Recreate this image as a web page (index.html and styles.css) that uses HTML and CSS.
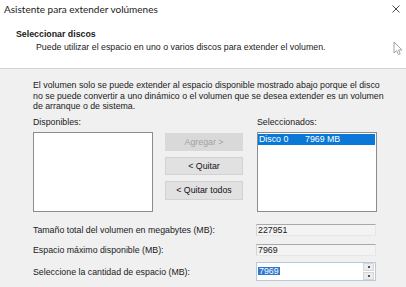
FILE: index.html
```html
<!DOCTYPE html>
<html>
<head>
<meta charset="utf-8">
<link rel="stylesheet" href="styles.css">
</head>
<body>
<div class="window">
  <div class="titlebar">
    <span class="title">Asistente para extender volúmenes</span>
    <svg class="close" width="8" height="8" viewBox="0 0 8 8"><path d="M0.5 0.5 L7.5 7.5 M7.5 0.5 L0.5 7.5" stroke="#333" stroke-width="0.9" fill="none"/></svg>
  </div>
  <div class="header">
    <div class="heading">Seleccionar discos</div>
    <div class="subheading">Puede utilizar el espacio en uno o varios discos para extender el volumen.</div>
  </div>
  <div class="content">
    <p class="note">El volumen solo se puede extender al espacio disponible mostrado abajo porque el disco<br>no se puede convertir a uno dinámico o el volumen que se desea extender es un volumen<br>de arranque o de sistema.</p>
    <div class="lists">
      <div class="col">
        <div class="label">Disponibles:</div>
        <div class="listbox"></div>
      </div>
      <div class="buttons">
        <div class="btn disabled">Agregar &gt;</div>
        <div class="btn">&lt; Quitar</div>
        <div class="btn tall">&lt; Quitar todos</div>
      </div>
      <div class="col">
        <div class="label">Seleccionados:</div>
        <div class="listbox">
          <div class="item"><span class="disk">Disco 0</span><span>7969 MB</span></div>
        </div>
      </div>
    </div>
    <div class="fields">
      <div class="row">
        <span class="flabel">Tamaño total del volumen en megabytes (MB):</span>
        <div class="ro">227951</div>
      </div>
      <div class="row r2">
        <span class="flabel">Espacio máximo disponible (MB):</span>
        <div class="ro">7969</div>
      </div>
      <div class="row r3">
        <span class="flabel">Seleccione la cantidad de espacio (MB):</span>
        <div class="spin">
          <span class="sel">7969</span>
          <div class="spinbtns">
            <div class="sb"><span class="dot"></span></div>
            <div class="sb"><span class="dot"></span></div>
          </div>
        </div>
      </div>
    </div>
  </div>
  <svg class="cursor" width="11" height="15" viewBox="0 0 11 15"><path d="M1 1 L1 12 L3.6 9.6 L5.4 13.6 L7.2 12.8 L5.5 9 L9 9 Z" fill="#fff" stroke="#9a9a9a" stroke-width="0.9" stroke-linejoin="round"/></svg>
</div>
</body>
</html>
```
FILE: styles.css
```css
html, body {
  margin: 0;
  padding: 0;
  background: #f0f0f0;
}
.window {
  position: relative;
  width: 406px;
  height: 287px;
  overflow: hidden;
  background: #f0f0f0;
  font-family: "Liberation Sans", Arial, sans-serif;
  font-size: 8.8px;
  color: #1a1a1a;
}
.titlebar {
  height: 20px;
  background: #fff;
  display: flex;
  align-items: center;
  justify-content: space-between;
  padding: 0 6px 0 4px;
}
.title {
  font-family: Lato, sans-serif;
  font-size: 10px;
  color: #222;
  position: relative;
  top: -1px;
}
.close {
  position: relative;
  top: -1px;
}
.header {
  background: #fff;
  height: 49px;
  border-bottom: 1px solid #d4d4d4;
  box-sizing: border-box;
  padding-top: 9px;
  padding-left: 16px;
}
.heading {
  font-weight: bold;
  line-height: 11px;
}
.subheading {
  margin-top: 2px;
  padding-left: 20px;
  line-height: 11px;
}
.content {
  padding: 11px 0 0 33px;
}
.note {
  margin: 0;
  line-height: 10.5px;
}
.lists {
  display: flex;
  margin-top: 5.5px;
}
.col {
  display: flex;
  flex-direction: column;
}
.label {
  line-height: 10.5px;
  margin-bottom: 4px;
}
.listbox {
  width: 120px;
  height: 80px;
  box-sizing: border-box;
  background: #fff;
  border: 1px solid #8c8c8c;
  padding: 1px 1px 0 0;
}
.item {
  height: 11px;
  background: #0a78d7;
  color: #fff;
  display: flex;
  align-items: center;
  line-height: 11px;
  padding-left: 1px;
}
.disk {
  width: 46px;
}
.buttons {
  display: flex;
  flex-direction: column;
  gap: 6px;
  margin: 15.5px 14px 0 12px;
}
.btn {
  width: 78px;
  height: 18px;
  box-sizing: border-box;
  background: #e1e1e1;
  border: 1px solid #d2d2d2;
  display: flex;
  align-items: center;
  justify-content: center;
  color: #111;
}
.btn.tall {
  height: 19px;
}
.btn.disabled {
  background: #d9d9d9;
  border-color: #d9d9d9;
  color: #a2a2a2;
}
.fields {
  margin-top: 12px;
  display: flex;
  flex-direction: column;
}
.row {
  display: flex;
  align-items: center;
}
.r2 {
  margin-top: 8px;
}
.r3 {
  margin-top: 6px;
}
.flabel {
  width: 223px;
  line-height: 11px;
  position: relative;
  top: 1px;
}
.ro {
  width: 120px;
  height: 12px;
  box-sizing: border-box;
  background: #f3f3f3;
  border-top: 1px solid #a8a8a8;
  border-left: 1px solid #d4d4d4;
  border-right: 1px solid #e6e6e6;
  border-bottom: 1px solid #e6e6e6;
  line-height: 11px;
  padding-left: 1px;
}
.spin {
  width: 120px;
  height: 19px;
  box-sizing: border-box;
  background: #fff;
  border: 1px solid #b9c8dc;
  display: flex;
  align-items: center;
  justify-content: space-between;
  padding-left: 1px;
}
.sel {
  background: #2f76cf;
  color: #fff;
  line-height: 8px;
  padding: 0 1px;
}
.spinbtns {
  width: 11px;
  height: 17px;
  margin-right: 1px;
  display: flex;
  flex-direction: column;
  gap: 1px;
}
.sb {
  flex: 1;
  background: #ececec;
  border: 1px solid #d6d6d6;
  display: flex;
  align-items: center;
  justify-content: center;
}
.dot {
  width: 2px;
  height: 2px;
  background: #555;
}
.cursor {
  position: absolute;
  left: 393px;
  top: 41px;
}
```
